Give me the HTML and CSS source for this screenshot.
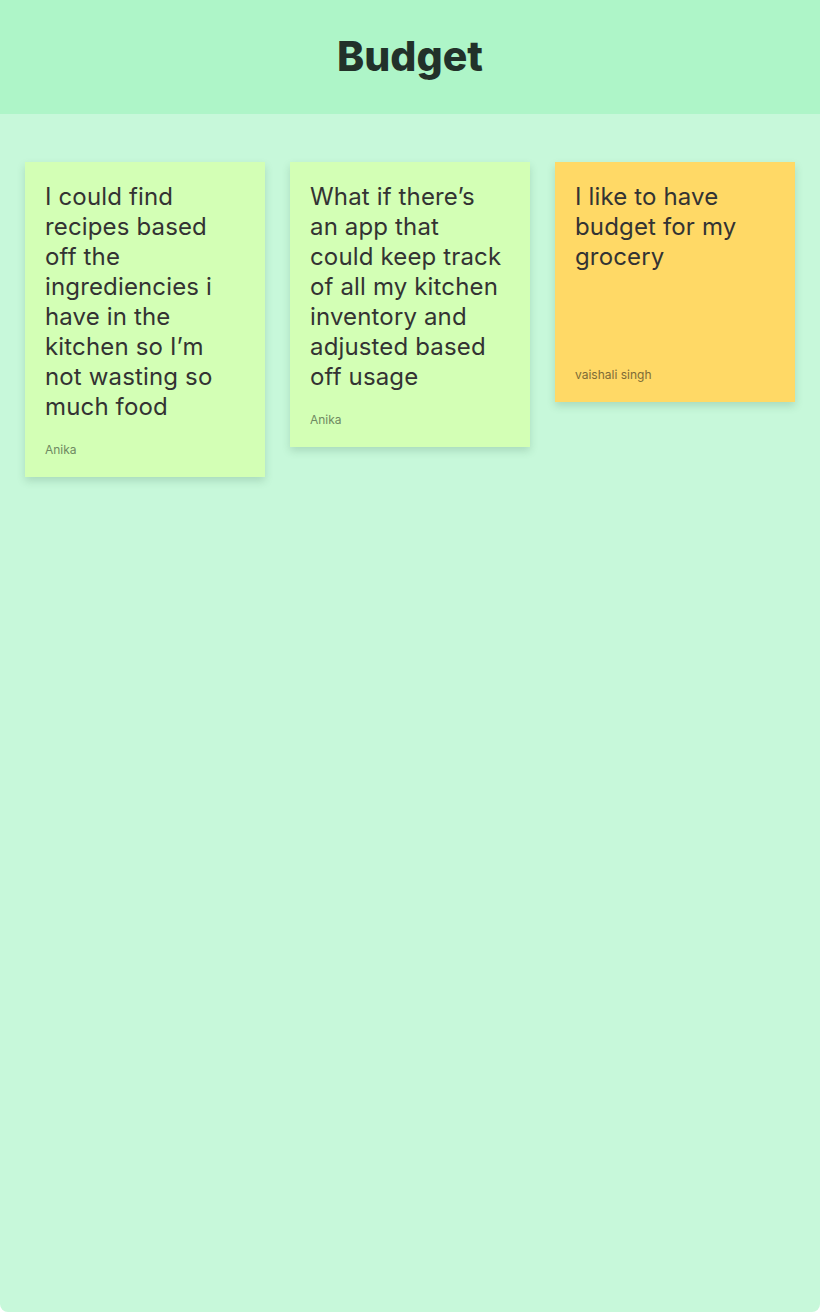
FILE: index.html
```html
<!DOCTYPE html>
<html>
<head>
<meta charset="utf-8">
<link rel="stylesheet" href="styles.css">
</head>
<body>
<div class="page">
  <header class="header"><h1 class="title">Budget</h1></header>
  <main class="board">
    <div class="note note-green">
      <p class="note-text">I could find recipes based off the ingrediencies i have in the kitchen so I’m not wasting so much food</p>
      <p class="note-author">Anika</p>
    </div>
    <div class="note note-green">
      <p class="note-text">What if there’s an app that could keep track of all my kitchen inventory and adjusted based off usage</p>
      <p class="note-author">Anika</p>
    </div>
    <div class="note note-yellow">
      <p class="note-text">I like to have budget for my grocery</p>
      <p class="note-author">vaishali singh</p>
    </div>
  </main>
</div>
</body>
</html>
```
FILE: styles.css
```css
html, body { margin: 0; padding: 0; background: #ffffff; }
.page {
  width: 820px;
  height: 1312px;
  background: #c7f8da;
  border-radius: 0 0 8px 8px;
  overflow: hidden;
  font-family: "Inter", "Noto Sans", sans-serif;
}
.header {
  height: 114px;
  background: #aef5c8;
  display: flex;
  align-items: center;
  justify-content: center;
}
.title {
  margin: 0;
  font-family: "Inter", sans-serif;
  font-weight: 800;
  font-size: 41px;
  color: #22312a;
  letter-spacing: 0;
  padding-bottom: 2px;
}
.board {
  display: flex;
  align-items: flex-start;
  gap: 25px;
  padding: 48px 25px 0;
}
.note {
  width: 240px;
  min-height: 240px;
  box-sizing: border-box;
  padding: 20px 24px 20px 20px;
  display: flex;
  flex-direction: column;
  box-shadow: 0 4px 8px rgba(40, 90, 60, 0.18);
}
.note-green { background: #d3ffb5; }
.note-yellow { background: #ffd966; }
.note-text {
  margin: 0;
  font-size: 24px;
  line-height: 30px;
  letter-spacing: 0.15px;
  color: #333333;
}
.note-author {
  margin: auto 0 0;
  padding-top: 20px;
  font-size: 12px;
  line-height: 15px;
  color: #6f8a62;
}
.note-yellow .note-author { color: #7d6b36; }
```
